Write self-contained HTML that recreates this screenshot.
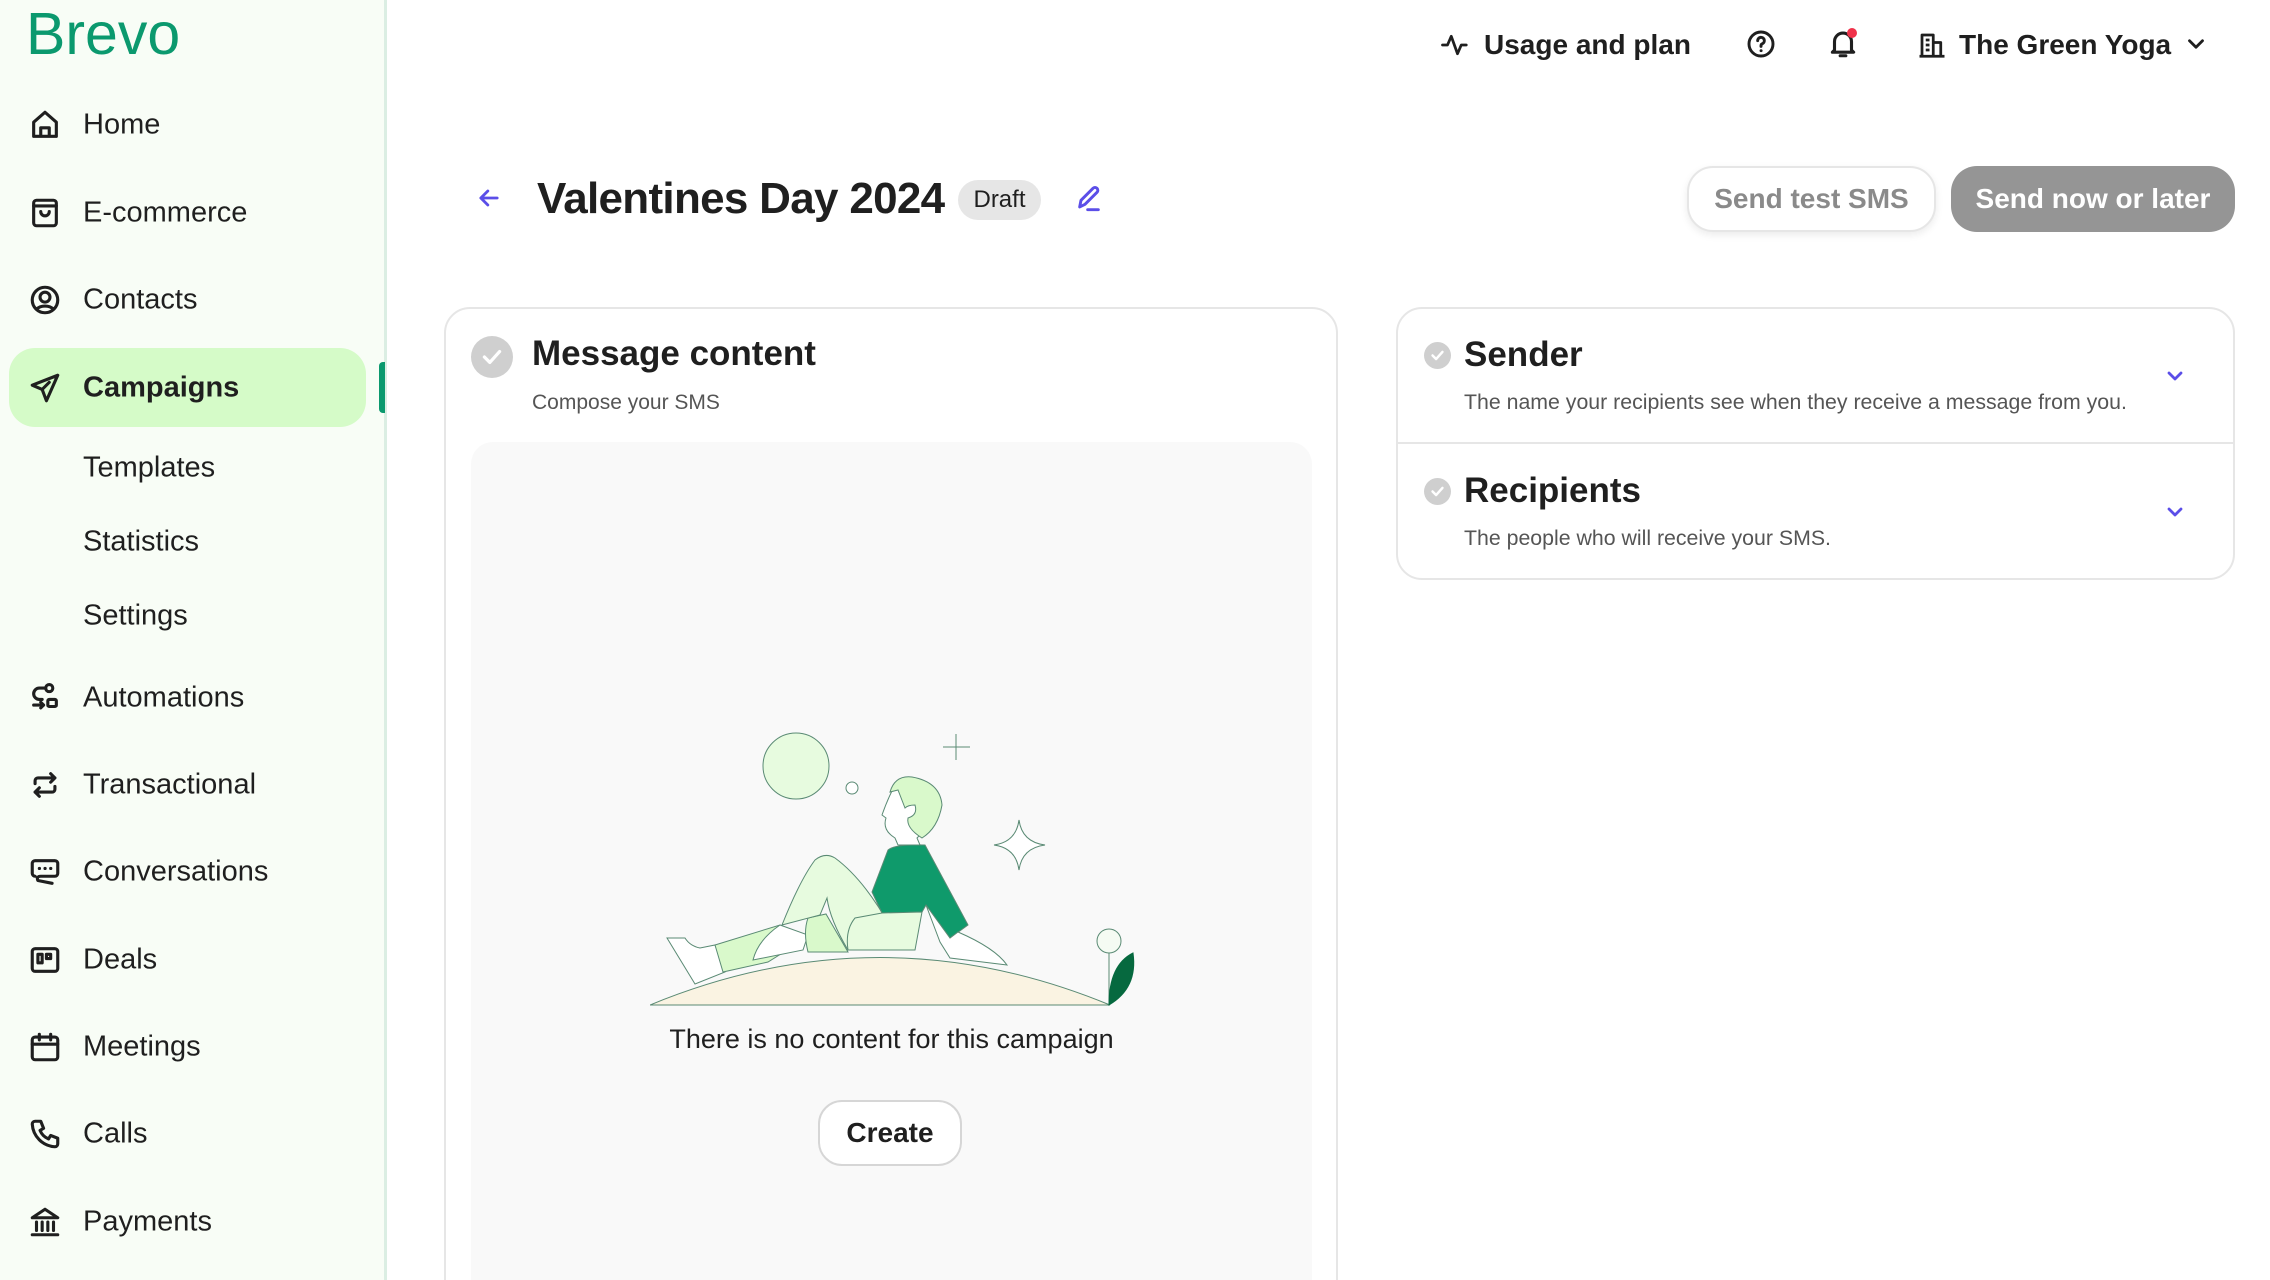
<!DOCTYPE html>
<html><head><meta charset="utf-8"><style>
*{margin:0;padding:0;box-sizing:border-box}
html,body{width:2270px;height:1280px;overflow:hidden}
body{background:#fff;font-family:"Liberation Sans",sans-serif;color:#1f1f1f;position:relative}
#wrap{position:absolute;left:0;top:0;width:2270px;height:1280px;overflow:hidden}
.a{position:absolute}
#side{left:0;top:0;width:387px;height:1280px;background:#f8fdf6;border-right:3px solid #dbeee3}
.nav{position:absolute;left:83px;font-size:29px;color:#1f1f1f;line-height:1;transform:translateY(-50%)}
.ic{position:absolute;left:28px;width:34px;height:34px;transform:translateY(-50%)}
.ic svg{width:34px;height:34px;fill:none;stroke:#1f1f1f;stroke-width:2.2;stroke-linecap:round;stroke-linejoin:round}
.card{border:2px solid #e6e6e6;border-radius:26px;background:#fff}
.chk{border-radius:50%;background:#cfcfcf}
</style></head><body><div id="wrap">
<div id="side" class="a">
<div class="a" style="left:26px;top:0px;font-size:59px;color:#0b996e;font-weight:400">Brevo</div>
<div class="a" style="left:9px;top:348px;width:357px;height:79px;background:#d5fbc8;border-radius:26px"></div>
<div class="a" style="left:379px;top:362px;width:6px;height:51px;background:#0b996e;border-radius:4px 0 0 4px"></div>

<div class="ic" style="top:125px"><svg viewBox="0 0 24 24"><path d="M4 20V10l8-7 8 7v10H4zM9 20v-6h6v6"/></svg></div><div class="nav" style="top:125px">Home</div>
<div class="ic" style="top:213px"><svg viewBox="0 0 24 24"><rect x="4" y="3" width="16" height="18" rx="2"/><path d="M4 7h16M9 11a3 3 0 0 0 6 0"/></svg></div><div class="nav" style="top:213px">E-commerce</div>
<div class="ic" style="top:300px"><svg viewBox="0 0 24 24"><circle cx="12" cy="12" r="9"/><circle cx="12" cy="10" r="3.5"/><path d="M6 18.5c3-3 9-3 12 0"/></svg></div><div class="nav" style="top:300px">Contacts</div>
<div class="ic" style="top:388px"><svg viewBox="0 0 24 24"><path d="M21 3L3 10l7 3 3 8 8-18zM10 13l5-5"/></svg></div><div class="nav" style="top:388px;font-weight:700">Campaigns</div>
<div class="nav" style="top:468px">Templates</div>
<div class="nav" style="top:542px">Statistics</div>
<div class="nav" style="top:616px">Settings</div>
<div class="ic" style="top:698px"><svg viewBox="0 0 24 24"><circle cx="15" cy="5" r="2.5"/><rect x="14" y="13" width="6" height="5" rx="1"/><path d="M12.5 5H8a4 4 0 0 0 0 8h2M9 15l2 2-2 2M4 17h7"/></svg></div><div class="nav" style="top:698px">Automations</div>
<div class="ic" style="top:785px"><svg viewBox="0 0 24 24"><path d="M5 11V9a2 2 0 0 1 2-2h12M16 4l3 3-3 3M19 13v2a2 2 0 0 1-2 2H5M8 20l-3-3 3-3"/></svg></div><div class="nav" style="top:785px">Transactional</div>
<div class="ic" style="top:872px"><svg viewBox="0 0 24 24"><path d="M5 4h14a2 2 0 0 1 2 2v7a2 2 0 0 1-2 2H9c-2 0-3 1-2 3l10 2M5 4a2 2 0 0 0-2 2v7c0 1 1 2 2 2"/><path d="M8 9.5h.1M12 9.5h.1M16 9.5h.1"/></svg></div><div class="nav" style="top:872px">Conversations</div>
<div class="ic" style="top:960px"><svg viewBox="0 0 24 24"><rect x="3" y="4" width="18" height="16" rx="2"/><rect x="7" y="8" width="3" height="6"/><rect x="13" y="8" width="3" height="3"/></svg></div><div class="nav" style="top:960px">Deals</div>
<div class="ic" style="top:1047px"><svg viewBox="0 0 24 24"><rect x="3" y="5" width="18" height="16" rx="2"/><path d="M3 10h18M8 3v4M16 3v4"/></svg></div><div class="nav" style="top:1047px">Meetings</div>
<div class="ic" style="top:1134px"><svg viewBox="0 0 24 24"><path d="M5 3h4l2 5-2.5 1.5a11 11 0 0 0 6 6L16 13l5 2v4a2 2 0 0 1-2 2A17 17 0 0 1 3 5a2 2 0 0 1 2-2"/></svg></div><div class="nav" style="top:1134px">Calls</div>
<div class="ic" style="top:1222px"><svg viewBox="0 0 24 24"><path d="M3 9l9-6 9 6H3zM3 21h18M6 12v6M10 12v6M14 12v6M18 12v6"/></svg></div><div class="nav" style="top:1222px">Payments</div>
</div>

<!-- top bar -->
<svg class="a" style="left:1440px;top:30px" width="30" height="30" viewBox="0 0 24 24" fill="none" stroke="#1f1f1f" stroke-width="2.2" stroke-linecap="round" stroke-linejoin="round"><path d="M2 12h4l3-7 5 14 3-7h4"/></svg>
<div class="a" style="left:1484px;top:29px;font-size:28px;font-weight:700">Usage and plan</div>
<svg class="a" style="left:1745px;top:28px" width="32" height="32" viewBox="0 0 24 24" fill="none" stroke="#1f1f1f" stroke-width="2.2" stroke-linecap="round"><circle cx="12" cy="12" r="9"/><path d="M9.5 9.5a2.5 2.5 0 1 1 3.5 2.3c-.7.3-1 .8-1 1.5v.5M12 17h.1"/></svg>
<svg class="a" style="left:1826px;top:26px" width="34" height="34" viewBox="0 0 24 24" fill="none" stroke="#1f1f1f" stroke-width="2.2" stroke-linecap="round" stroke-linejoin="round"><path d="M6 17V11a6 6 0 0 1 12 0v6l1.5 1.5h-15zM10 21h4"/></svg>
<div class="a" style="left:1847px;top:28px;width:10px;height:10px;border-radius:50%;background:#f0324a"></div>
<svg class="a" style="left:1917px;top:30px" width="30" height="30" viewBox="0 0 24 24" fill="none" stroke="#1f1f1f" stroke-width="2.2" stroke-linejoin="round"><path d="M4 21V4h9v17M13 10h6v11M2 21h20M7 8h3M7 12h3M7 16h3"/></svg>
<div class="a" style="left:1959px;top:29px;font-size:28px;font-weight:700">The Green Yoga</div>
<svg class="a" style="left:2183px;top:31px" width="26" height="26" viewBox="0 0 24 24" fill="none" stroke="#1f1f1f" stroke-width="2.6" stroke-linecap="round" stroke-linejoin="round"><path d="M6 9l6 6 6-6"/></svg>

<!-- title -->
<svg class="a" style="left:475px;top:184px" width="28" height="28" viewBox="0 0 24 24" fill="none" stroke="#5b4ee8" stroke-width="2.4" stroke-linecap="round" stroke-linejoin="round"><path d="M19 12H5M11 6l-6 6 6 6"/></svg>
<div class="a" style="left:537px;top:174px;font-size:44px;font-weight:700;letter-spacing:-0.7px">Valentines Day 2024</div>
<div class="a" style="left:958px;top:180px;width:83px;height:40px;border-radius:20px;background:#e6e6e6;font-size:24px;text-align:center;line-height:40px">Draft</div>
<svg class="a" style="left:1073px;top:183px" width="32" height="32" viewBox="0 0 24 24" fill="none" stroke="#5b4ee8" stroke-width="2.2" stroke-linecap="round" stroke-linejoin="round"><path d="M5 18l1-5 9-9a2 2 0 0 1 3 3l-9 9-4 2zM11 20h8"/></svg>
<div class="a" style="left:1687px;top:166px;width:249px;height:66px;border:2px solid #e6e6e6;border-radius:26px;background:#fff;box-shadow:0 3px 8px rgba(0,0,0,.08);font-size:28px;font-weight:700;color:#8a8a8a;text-align:center;line-height:62px">Send test SMS</div>
<div class="a" style="left:1951px;top:166px;width:284px;height:66px;border-radius:26px;background:#959595;font-size:28px;font-weight:700;color:#fff;text-align:center;line-height:66px">Send now or later</div>

<!-- left card -->
<div class="a card" style="left:444px;top:307px;width:894px;height:1000px"></div>
<div class="a chk" style="left:471px;top:336px;width:42px;height:42px"></div>
<svg class="a" style="left:479px;top:344px" width="26" height="26" viewBox="0 0 24 24" fill="none" stroke="#fff" stroke-width="3" stroke-linecap="round" stroke-linejoin="round"><path d="M5 12l5 5 9-10"/></svg>
<div class="a" style="left:532px;top:334px;font-size:35px;font-weight:700">Message content</div>
<div class="a" style="left:532px;top:391px;font-size:21px;color:#555">Compose your SMS</div>
<div class="a" style="left:471px;top:442px;width:841px;height:900px;background:#f9f9f9;border-radius:22px"></div>
<svg class="a" style="left:650px;top:720px" width="500" height="300" viewBox="0 0 500 300" fill="none" stroke="#5a8a74" stroke-width="1">
<circle cx="146" cy="46" r="33" fill="#e7fbdf"/>
<circle cx="202" cy="68" r="6" fill="#fff"/>
<path d="M306 14v26M293 27h27"/>
<path d="M369 100q3 22 26 25q-23 3-26 25q-3-22-25-25q22-3 25-25z" fill="#fff"/>
<path d="M17 218l18 0q5 8 15 10l15-3l10 27l-30 12z" fill="#fff"/>
<path d="M65 225l65-20l28 12l-40 25l-45 10z" fill="#d9f9cb"/>
<path d="M130 205l28 10l-5 15l-50 10q5-20 27-35z" fill="#fff"/>
<path d="M158 198l18-4l22 38l-40 0q-5-20 0-34z" fill="#d9f9cb"/>
<path d="M132 205Q150 160 165 140Q175 132 185 138Q215 160 242 210L232 228L198 230Q180 200 177 178L170 195Z" fill="#e7fbdf"/>
<path d="M222 172L238 130Q245 124 275 125L318 205L300 218L276 185L272 192L232 193Z" fill="#0f9a6b"/>
<path d="M232 193L272 192L265 230L198 230Q195 210 205 198Z" fill="#e7fbdf"/>
<path d="M276 185L300 218L308 212Q345 228 357 245L300 238L290 222Z" fill="#fff"/>
<path d="M245 65Q238 78 232 95L236 98Q232 110 245 118L248 125L270 125L267 118Q280 105 288 95Q290 75 275 62Q258 52 245 65Z" fill="#fff"/>
<path d="M240 72Q245 55 262 57Q290 62 292 85Q288 108 272 118Q256 108 258 98Q268 95 265 85Q258 85 255 88L248 70Z" fill="#d9f9cb"/>
<path d="M0 285q230-95 460 0z" fill="#faf3e2"/>
<circle cx="459" cy="221" r="12" fill="#f5fbf3"/>
<path d="M459 233v52"/>
<path d="M459 285q0-40 24-52q5 35-24 52z" fill="#06693f" stroke="#06693f"/>
</svg>
<div class="a" style="left:471px;top:1024px;width:841px;text-align:center;font-size:27px;color:#1f1f1f">There is no content for this campaign</div>
<div class="a" style="left:818px;top:1100px;width:144px;height:66px;border:2px solid #d6d6d6;border-radius:24px;background:#fff;font-size:28px;font-weight:700;text-align:center;line-height:62px">Create</div>

<!-- right card -->
<div class="a card" style="left:1396px;top:307px;width:839px;height:273px"></div>
<div class="a" style="left:1398px;top:442px;width:835px;height:2px;background:#e6e6e6"></div>
<div class="a chk" style="left:1424px;top:342px;width:27px;height:27px"></div>
<svg class="a" style="left:1429px;top:347px" width="17" height="17" viewBox="0 0 24 24" fill="none" stroke="#fff" stroke-width="3.5" stroke-linecap="round" stroke-linejoin="round"><path d="M5 12l5 5 9-10"/></svg>
<div class="a" style="left:1464px;top:335px;font-size:35px;font-weight:700">Sender</div>
<div class="a" style="left:1464px;top:390px;font-size:21.3px;color:#555">The name your recipients see when they receive a message from you.</div>
<svg class="a" style="left:2163px;top:364px" width="24" height="24" viewBox="0 0 24 24" fill="none" stroke="#5b4ee8" stroke-width="2.8" stroke-linecap="round" stroke-linejoin="round"><path d="M6 9l6 6 6-6"/></svg>
<div class="a chk" style="left:1424px;top:478px;width:27px;height:27px"></div>
<svg class="a" style="left:1429px;top:483px" width="17" height="17" viewBox="0 0 24 24" fill="none" stroke="#fff" stroke-width="3.5" stroke-linecap="round" stroke-linejoin="round"><path d="M5 12l5 5 9-10"/></svg>
<div class="a" style="left:1464px;top:471px;font-size:35px;font-weight:700">Recipients</div>
<div class="a" style="left:1464px;top:526px;font-size:21.3px;color:#555">The people who will receive your SMS.</div>
<svg class="a" style="left:2163px;top:500px" width="24" height="24" viewBox="0 0 24 24" fill="none" stroke="#5b4ee8" stroke-width="2.8" stroke-linecap="round" stroke-linejoin="round"><path d="M6 9l6 6 6-6"/></svg>
</div></body></html>
